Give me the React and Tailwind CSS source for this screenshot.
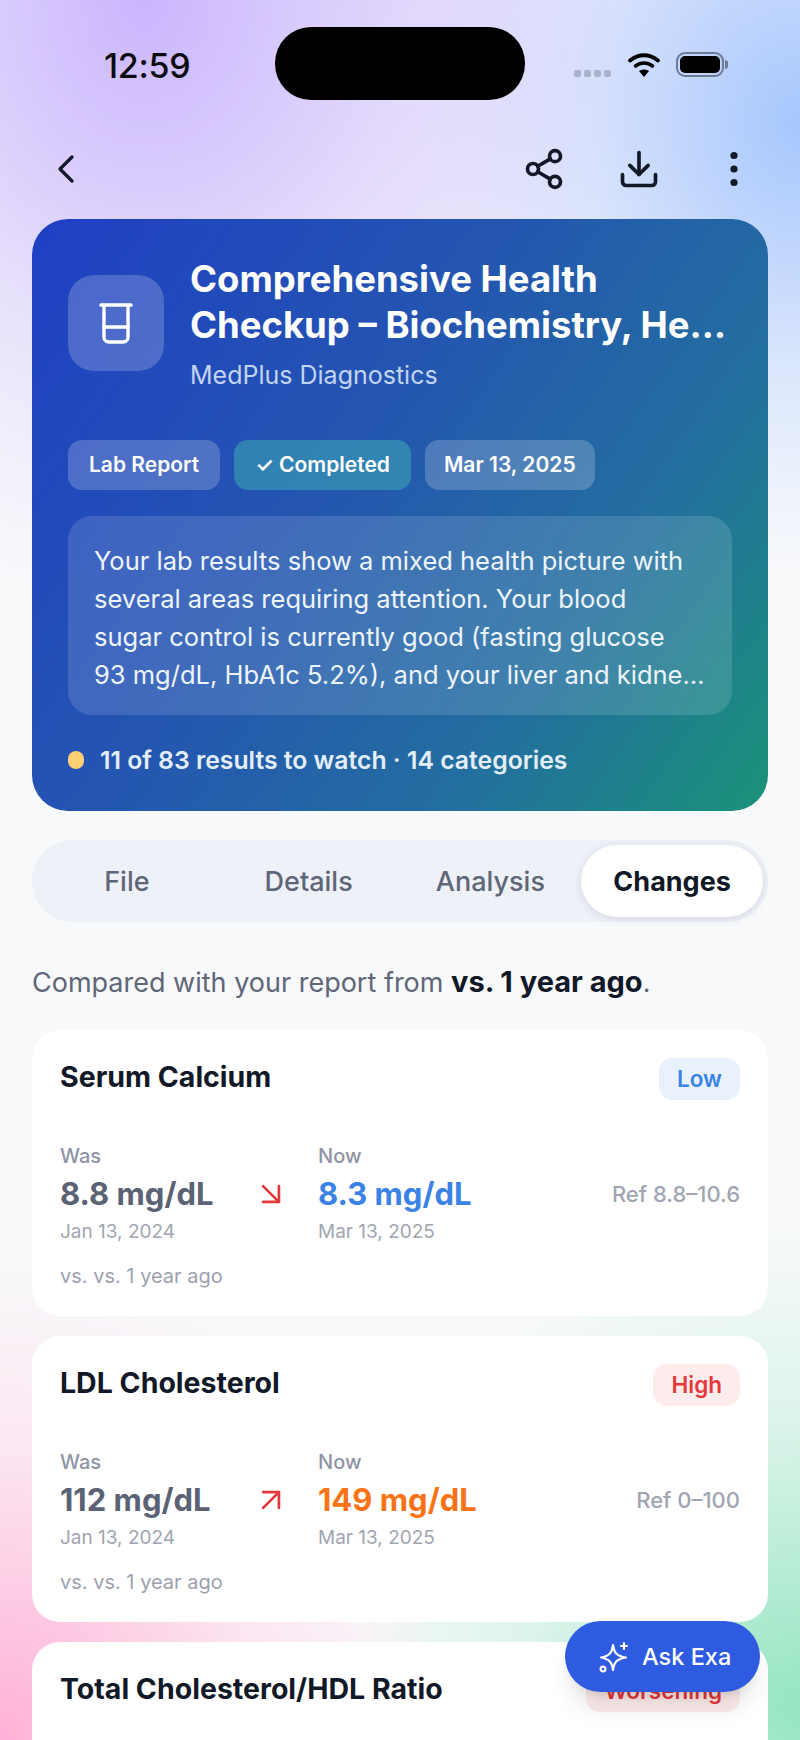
import React from 'react';
import { ChevronLeft, Share2, Download, ArrowDownRight, ArrowUpRight } from 'lucide-react';

const changes = [
  { name: 'Serum Calcium', badge: 'Low', badgeClass: 'bg-[#e9f1fd] text-[#3b82e6]', was: '8.8 mg/dL', now: '8.3 mg/dL', nowClass: 'text-[#3b82e6]', ref: 'Ref 8.8–10.6', down: true },
  { name: 'LDL Cholesterol', badge: 'High', badgeClass: 'bg-[#fdecec] text-[#e5383b]', was: '112 mg/dL', now: '149 mg/dL', nowClass: 'text-[#f97316]', ref: 'Ref 0–100', down: false },
  { name: 'Total Cholesterol/HDL Ratio', badge: 'Worsening', badgeClass: 'bg-[#fdecec] text-[#e5383b]' },
];

const tabs = ['File', 'Details', 'Analysis', 'Changes'];

const StatusBar = () => (
  <div className="relative h-[110px] shrink-0">
    <span className="absolute left-[104px] top-[46px] text-[34px] leading-[40px] font-medium tracking-[-0.3px] text-[#0b0b0f]">12:59</span>
    <div className="absolute left-[275px] top-[27px] w-[250px] h-[73px] rounded-[36px] bg-black" />
    <div className="absolute left-[574px] top-[70px] flex gap-[3px]">
      <i className="w-[7px] h-[7px] rounded-[2px] bg-[#a9b3c9]" />
      <i className="w-[7px] h-[7px] rounded-[2px] bg-[#a9b3c9]" />
      <i className="w-[7px] h-[7px] rounded-[2px] bg-[#a9b3c9]" />
      <i className="w-[7px] h-[7px] rounded-[2px] bg-[#a9b3c9]" />
    </div>
    <svg className="absolute left-[627px] top-[52px]" width="34" height="25" viewBox="0 0 34 25" fill="none">
      <path d="M3 8.5C11.5 1.5 22.5 1.5 31 8.5" stroke="#000" strokeWidth="3.8" strokeLinecap="round" />
      <path d="M8.5 14C13.5 10 20.5 10 25.5 14" stroke="#000" strokeWidth="3.6" strokeLinecap="round" />
      <path d="M17 25L12 19C15 17 19 17 22 19Z" fill="#000" />
    </svg>
    <div className="absolute left-[676px] top-[52px] w-[48px] h-[25px] rounded-[9px] border-2 border-[#6d7a94] p-[2px]">
      <div className="w-full h-full rounded-[5px] bg-black" />
    </div>
    <div className="absolute left-[725px] top-[60px] w-[3px] h-[9px] rounded-r-sm bg-[#6d7a94]" />
  </div>
);

const Toolbar = () => (
  <div className="h-[109px] shrink-0 flex items-center pt-[9px] pl-[42px] pr-[60px] text-[#111827]">
    <ChevronLeft size={48} strokeWidth={1.6} />
    <div className="ml-auto flex items-center">
      <Share2 size={44} strokeWidth={2} />
      <Download size={44} strokeWidth={2} className="ml-[51px]" />
      <svg className="ml-[67px]" width="12" height="36" viewBox="0 0 12 36" fill="#111827">
        <circle cx="6" cy="4.5" r="3.6" />
        <circle cx="6" cy="18" r="3.6" />
        <circle cx="6" cy="31.5" r="3.6" />
      </svg>
    </div>
  </div>
);

const Hero = () => (
  <div className="mx-8 h-[592px] shrink-0 rounded-[36px] px-9 bg-[linear-gradient(125deg,#1f3fc4_0%,#2456b0_42%,#236f9f_72%,#1a9278_100%)] text-white">
    <div className="flex pt-[37px] h-[221px]">
      <div className="mt-[19px] w-[96px] h-[96px] rounded-[26px] bg-white/20 flex items-center justify-center shrink-0">
        <svg width="36" height="44" viewBox="0 0 36 44" fill="none" stroke="#fff" strokeWidth="3.4" strokeLinecap="round" strokeLinejoin="round">
          <path d="M3 4H33" />
          <path d="M6 4V36C6 39 8 41 11 41H25C28 41 30 39 30 36V4" />
          <path d="M6 26H30" />
        </svg>
      </div>
      <div className="ml-[26px] min-w-0">
        <h1 className="text-[36.5px] leading-[46px] font-bold">Comprehensive Health Checkup – Biochemistry, He…</h1>
        <p className="mt-[11px] text-[25px] leading-[32px] text-[#c3d4f3]">MedPlus Diagnostics</p>
      </div>
    </div>
    <div className="flex gap-[14px] text-[21px] leading-[50px] font-semibold">
      <span className="h-[50px] px-[21px] rounded-[14px] bg-white/20">Lab Report</span>
      <span className="h-[50px] px-[21px] rounded-[14px] bg-[#3ba4b4]/60">✓ Completed</span>
      <span className="h-[50px] px-[19px] rounded-[14px] bg-white/20">Mar 13, 2025</span>
    </div>
    <div className="mt-[26px] h-[199px] rounded-[24px] bg-white/[0.13] px-[26px] pt-[26px] text-[25.5px] leading-[38px] text-[#eef4fc] whitespace-nowrap">
      Your lab results show a mixed health picture with<br />
      several areas requiring attention. Your blood<br />
      sugar control is currently good (fasting glucose<br />
      93 mg/dL, HbA1c 5.2%), and your liver and kidne…
    </div>
    <div className="mt-[29px] flex items-center gap-[16px]">
      <span className="w-[16px] h-[18px] rounded-full bg-[#fdcf74]" />
      <span className="text-[24.75px] leading-[32px] font-semibold text-[#e4eefa]">11 of 83 results to watch · 14 categories</span>
    </div>
  </div>
);

const Tabs = () => (
  <div className="mx-8 mt-[29px] h-[82px] shrink-0 rounded-[41px] bg-[#eef1f7] flex items-center pl-1 pr-[5px] text-[27px]">
    {tabs.map((t) => (
      <div
        key={t}
        className={t === 'Changes'
          ? 'flex-1 h-[72px] pt-[3px] rounded-[36px] bg-white shadow-[0_2px_8px_rgba(30,40,80,0.12)] flex items-center justify-center font-bold text-[#111827]'
          : 'flex-1 h-[72px] pt-[3px] flex items-center justify-center font-medium text-[#5f6678]'}
      >
        {t}
      </div>
    ))}
  </div>
);

const ChangeCard = ({ item }) => (
  <div className="rounded-[28px] bg-white h-[286px] shrink-0 px-[28px] pt-[28px]">
    <div className="flex items-start justify-between">
      <h3 className="text-[28.5px] leading-[38px] font-bold text-[#111827]">{item.name}</h3>
      <span className={`h-[42px] px-[18px] rounded-[14px] text-[22.5px] leading-[42px] font-semibold ${item.badgeClass}`}>{item.badge}</span>
    </div>
    {item.was && (
      <>
        <div className="mt-[42px] flex">
          <div className="w-[200px]">
            <div className="text-[20px] leading-[28px] font-medium text-[#8e94a3]">Was</div>
            <div className="mt-[3px] text-[31px] leading-[42px] font-bold text-[#5a6273]">{item.was}</div>
            <div className="mt-[3px] text-[19px] leading-[28px] text-[#a0a5b1]">Jan 13, 2024</div>
          </div>
          <div className="w-[58px] pt-[33px] text-[#e5383b]">
            {item.down
              ? <ArrowDownRight size={38} strokeWidth={1.7} className="-ml-[8px]" />
              : <ArrowUpRight size={38} strokeWidth={1.7} className="-ml-[8px]" />}
          </div>
          <div>
            <div className="text-[20px] leading-[28px] font-medium text-[#8e94a3]">Now</div>
            <div className={`mt-[3px] text-[31px] leading-[42px] font-bold ${item.nowClass}`}>{item.now}</div>
            <div className="mt-[3px] text-[19px] leading-[28px] text-[#a0a5b1]">Mar 13, 2025</div>
          </div>
          <div className="ml-auto pt-[38px] text-[22px] leading-[28px] font-medium text-[#a0a5b1]">{item.ref}</div>
        </div>
        <div className="mt-[16px] text-[20px] leading-[28px] text-[#9ca1ae]">vs. vs. 1 year ago</div>
      </>
    )}
  </div>
);

export default function App() {
  return (
    <div className="relative h-[1740px] w-[800px] overflow-hidden flex flex-col font-['Inter',sans-serif] bg-[#f8f9fb] bg-[radial-gradient(ellipse_480px_600px_at_18%_0%,#cbb6fe_0%,#dccffc88_55%,transparent_100%),radial-gradient(ellipse_380px_450px_at_100%_7%,#a6c7fd_0%,#c9dcfd99_55%,transparent_100%),radial-gradient(ellipse_800px_480px_at_50%_0%,#e6e0fb_0%,transparent_100%),radial-gradient(ellipse_440px_480px_at_0%_100%,#ffb0d6_0%,#ffd6e888_60%,transparent_100%),radial-gradient(ellipse_460px_480px_at_100%_98%,#95e5c1_0%,#c5f0dc88_60%,transparent_100%)]">
      <StatusBar />
      <Toolbar />
      <Hero />
      <Tabs />
      <p className="mx-8 mt-[42px] text-[27px] leading-[36px] text-[#5f6678]">
        Compared with your report from <b className="text-[29px] font-bold text-[#111827]">vs. 1 year ago</b>.
      </p>
      <div className="mx-8 mt-[29px] flex flex-col gap-[20px]">
        {changes.map((item) => <ChangeCard key={item.name} item={item} />)}
      </div>
      <button className="absolute left-[565px] top-[1621px] w-[195px] h-[71px] pl-[33px] rounded-[36px] bg-[#2f5be0] shadow-xl text-white flex items-center gap-[12px] text-[23.5px] font-medium">
        <svg width="32" height="32" viewBox="0 0 32 32" fill="none" stroke="#fff" strokeWidth="2.2" strokeLinecap="round" strokeLinejoin="round">
          <path d="M15 4C16 12 19 15 28 16.5C19 18 16 21 15 29C14 21 11 18 3 16.5C11 15 14 12 15 4Z" />
          <path d="M26 2V8M23 5H29" />
          <circle cx="5" cy="28" r="2.4" />
        </svg>
        Ask Exa
      </button>
    </div>
  );
}
